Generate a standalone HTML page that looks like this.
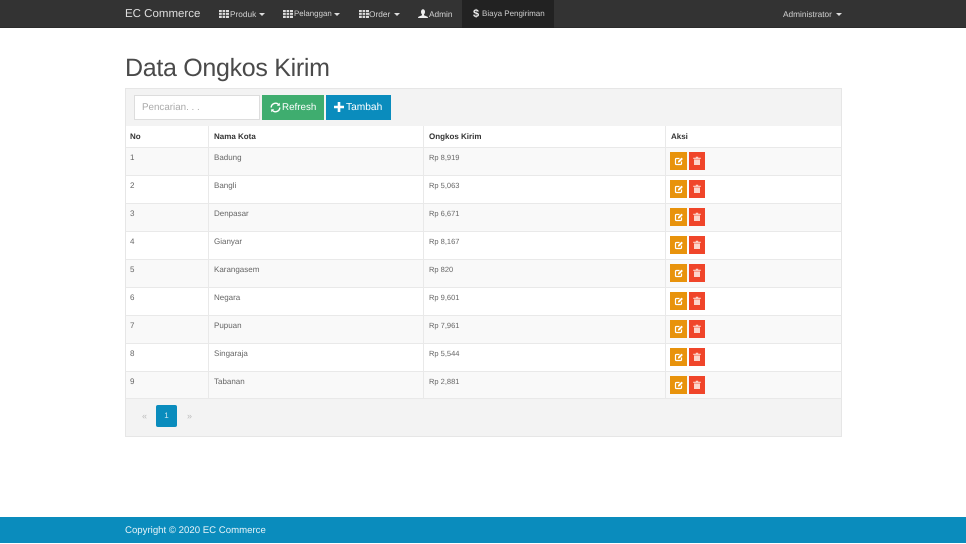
<!DOCTYPE html>
<html><head><meta charset="utf-8"><title>Data Ongkos Kirim</title>
<style>
*{box-sizing:border-box}
html,body{margin:0;padding:0}
body{width:966px;height:543px;position:relative;overflow:hidden;background:#fff;font-family:"Liberation Sans",sans-serif;color:#555;text-rendering:geometricPrecision}
.a{position:absolute;white-space:nowrap}
.nav{position:absolute;left:0;top:0;width:966px;height:28px;background:#333;border-bottom:1px solid #2c2c2c}
.n{position:absolute;top:0;height:28px;line-height:28px;font-size:8.300px;color:#d0d0d0;white-space:nowrap}
.car{position:absolute;top:13px;width:0;height:0;border-left:3px solid transparent;border-right:3px solid transparent;border-top:3px solid #ddd}
.panel{position:absolute;left:125px;top:88px;width:717px;height:349px;background:#f3f3f3;border:1px solid #e6e6e6}
.rw{position:absolute;left:125px;width:717px;border-bottom:1px solid #e9e9e9;border-left:1px solid #e6e6e6;border-right:1px solid #e6e6e6}
.cl{position:absolute;width:1px;background:#e9e9e9;top:126px;height:273px}
.t{position:absolute;font-size:8px;color:#666;white-space:nowrap;line-height:12px}
.p{font-size:7.500px}
.h{font-weight:bold;color:#333;font-size:8px}
svg{display:block}
</style></head><body>
<div class="nav"></div>
<div class="a" style="left:462px;top:0;width:92px;height:28px;background:#222"></div>
<div class="n" style="left:125px;font-size:11.500px;color:#ddd">EC Commerce</div>

<svg class="a" style="left:219px;top:10px" width="10" height="8"><path d="M0 0h10v8H0z" fill="#ddd"/><path d="M3.200 0v8M6.600 0v8M0 2.600h10M0 5.300h10" stroke="#333" stroke-width=".8"/></svg>
<div class="n" style="left:230px">Produk</div><div class="car" style="left:259px"></div>
<svg class="a" style="left:283px;top:10px" width="10" height="8"><path d="M0 0h10v8H0z" fill="#ddd"/><path d="M3.200 0v8M6.600 0v8M0 2.600h10M0 5.300h10" stroke="#333" stroke-width=".8"/></svg>
<div class="n" style="left:294px;font-size:7.900px">Pelanggan</div><div class="car" style="left:334px"></div>
<svg class="a" style="left:359px;top:10px" width="10" height="8"><path d="M0 0h10v8H0z" fill="#ddd"/><path d="M3.200 0v8M6.600 0v8M0 2.600h10M0 5.300h10" stroke="#333" stroke-width=".8"/></svg>
<div class="n" style="left:369px">Order</div><div class="car" style="left:394px"></div>
<svg class="a" style="left:418px;top:9px" width="10" height="10"><path d="M3 2.800a2 2.500 0 1 1 4 0c0 1.400-.6 2.300-1 2.700v.7l3 1.300c.7.300 1 .8 1 1.500H0c0-.7.3-1.200 1-1.500l3-1.300v-.7c-.4-.4-1-1.300-1-2.700z" fill="#eee"/></svg>
<div class="n" style="left:429px">Admin</div>
<div class="n" style="left:473px;font-size:11px;font-weight:bold;color:#eee">$</div>
<div class="n" style="left:482px;color:#ccc;font-size:8px">Biaya Pengiriman</div>
<div class="n" style="left:783px">Administrator</div><div class="car" style="left:836px"></div>

<div class="a" style="left:125px;top:52px;font-size:25px;line-height:32px;color:#4a4a4a;letter-spacing:-.3px">Data Ongkos Kirim</div>

<div class="panel"></div>
<div class="a" style="left:134px;top:95px;width:126px;height:25px;background:#fff;border:1px solid #ddd;font-size:9.800px;line-height:24px;padding-left:7px;color:#aaa">Pencarian. . .</div>
<div class="a" style="left:262px;top:95px;width:62px;height:25px;background:#3fad6f"></div>
<svg class="a" style="left:270px;top:102px" width="11" height="11" viewBox="0 0 11 11" fill="none" stroke="#fff" stroke-width="1.400"><path d="M1.200 5.500A4.300 4.300 0 0 1 8.700 2.700M9.800 5.500A4.300 4.300 0 0 1 2.300 8.300"/><path d="M9.800.7v3H6.800z" fill="#fff" stroke="none"/><path d="M1.200 10.300v-3h3z" fill="#fff" stroke="none"/></svg>
<div class="a" style="left:282px;top:95px;line-height:25px;font-size:9.800px;color:#fff">Refresh</div>
<div class="a" style="left:326px;top:95px;width:65px;height:25px;background:#0a8cbd"></div>
<svg class="a" style="left:334px;top:102px" width="10" height="10"><path d="M3.700 0h2.600v3.700H10v2.600H6.300V10H3.700V6.300H0V3.700h3.700z" fill="#fff"/></svg>
<div class="a" style="left:346px;top:95px;line-height:25px;font-size:10.200px;color:#fff">Tambah</div>

<div class="a" style="left:126px;top:126px;width:715px;height:273px;background:#fff"></div>
<div class="rw" style="top:126px;height:22px;background:#fff"></div>
<div class="rw" style="top:148px;height:28px;background:#f9f9f9"></div>
<div class="rw" style="top:176px;height:28px;background:#fff"></div>
<div class="rw" style="top:204px;height:28px;background:#f9f9f9"></div>
<div class="rw" style="top:232px;height:28px;background:#fff"></div>
<div class="rw" style="top:260px;height:28px;background:#f9f9f9"></div>
<div class="rw" style="top:288px;height:28px;background:#fff"></div>
<div class="rw" style="top:316px;height:28px;background:#f9f9f9"></div>
<div class="rw" style="top:344px;height:28px;background:#fff"></div>
<div class="rw" style="top:372px;height:27px;background:#f9f9f9"></div>
<div class="cl" style="left:208px"></div><div class="cl" style="left:423px"></div><div class="cl" style="left:665px"></div>

<div class="t h" style="left:130px;top:131px">No</div><div class="t h" style="left:214px;top:131px">Nama Kota</div><div class="t h" style="left:429px;top:131px">Ongkos Kirim</div><div class="t h" style="left:671px;top:131px">Aksi</div>

<div class="t" style="left:130px;top:152px">1</div><div class="t" style="left:214px;top:152px">Badung</div><div class="t p" style="left:429px;top:152px">Rp 8,919</div>
<div class="t" style="left:130px;top:180px">2</div><div class="t" style="left:214px;top:180px">Bangli</div><div class="t p" style="left:429px;top:180px">Rp 5,063</div>
<div class="t" style="left:130px;top:208px">3</div><div class="t" style="left:214px;top:208px">Denpasar</div><div class="t p" style="left:429px;top:208px">Rp 6,671</div>
<div class="t" style="left:130px;top:236px">4</div><div class="t" style="left:214px;top:236px">Gianyar</div><div class="t p" style="left:429px;top:236px">Rp 8,167</div>
<div class="t" style="left:130px;top:264px">5</div><div class="t" style="left:214px;top:264px">Karangasem</div><div class="t p" style="left:429px;top:264px">Rp 820</div>
<div class="t" style="left:130px;top:292px">6</div><div class="t" style="left:214px;top:292px">Negara</div><div class="t p" style="left:429px;top:292px">Rp 9,601</div>
<div class="t" style="left:130px;top:320px">7</div><div class="t" style="left:214px;top:320px">Pupuan</div><div class="t p" style="left:429px;top:320px">Rp 7,961</div>
<div class="t" style="left:130px;top:348px">8</div><div class="t" style="left:214px;top:348px">Singaraja</div><div class="t p" style="left:429px;top:348px">Rp 5,544</div>
<div class="t" style="left:130px;top:376px">9</div><div class="t" style="left:214px;top:376px">Tabanan</div><div class="t p" style="left:429px;top:376px">Rp 2,881</div>

<svg class="a" style="left:670px;top:152px" width="35" height="242" viewBox="0 0 35 242">
<defs>
<g id="btns">
<rect x="0" y="0" width="17" height="18" fill="#e8930c"/>
<rect x="19" y="0" width="16" height="18" fill="#f0452a"/>
<path d="M11.500 9.500v2a1 1 0 0 1-1 1h-4a1 1 0 0 1-1-1v-4a1 1 0 0 1 1-1h3" fill="none" stroke="#fff" stroke-width="1.200"/>
<path d="M7.800 10.700l.4-1.800 3.300-3.300 1.400 1.400-3.300 3.300z" fill="#fff"/>
<path d="M23.200 5.800h7.600v1.100h-7.600zM25.800 4.800h2.400v1h-2.400z" fill="#fcd5cc"/>
<path d="M24 7.400h6v5.600h-6z" fill="#fcd5cc"/>
</g>
</defs>
<use href="#btns" y="0"/><use href="#btns" y="28"/><use href="#btns" y="56"/><use href="#btns" y="84"/><use href="#btns" y="112"/><use href="#btns" y="140"/><use href="#btns" y="168"/><use href="#btns" y="196"/><use href="#btns" y="224"/>
</svg>

<div class="a" style="left:142px;top:410px;font-size:9px;line-height:12px;color:#bbb">«</div>
<div class="a" style="left:156px;top:405px;width:21px;height:22px;background:#0a8cbd;border-radius:2px;text-align:center;font-size:8px;line-height:22px;color:#cfe6f0">1</div>
<div class="a" style="left:187px;top:410px;font-size:9px;line-height:12px;color:#bbb">»</div>

<div class="a" style="left:0;top:517px;width:966px;height:26px;background:#0a8cbd"></div>
<div class="a" style="left:125px;top:518px;line-height:26px;font-size:9.650px;color:#e6f3f8">Copyright © 2020 EC Commerce</div>
</body></html>
